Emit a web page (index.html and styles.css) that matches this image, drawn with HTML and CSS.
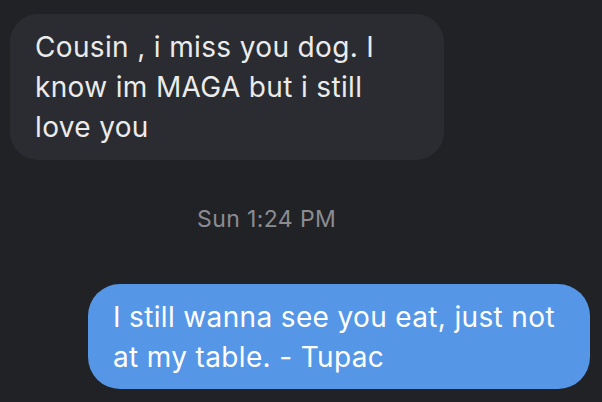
FILE: index.html
```html
<!DOCTYPE html>
<html>
<head>
<meta charset="utf-8">
<link rel="stylesheet" href="styles.css">
</head>
<body>
<div class="thread">
  <div class="bubble incoming">Cousin , i miss you dog. I<br>know im MAGA but i still<br>love you</div>
  <div class="stamp">Sun 1:24 PM</div>
  <div class="bubble outgoing">I still wanna see you eat, just not<br>at my table. - Tupac</div>
</div>
</body>
</html>
```

FILE: styles.css
```css
html, body {
  margin: 0;
  padding: 0;
  background: #212226;
  width: 602px;
  height: 402px;
  overflow: hidden;
}
.thread {
  display: flex;
  flex-direction: column;
  align-items: flex-start;
  padding-top: 14px;
  font-family: Inter, "Liberation Sans", sans-serif;
}
.bubble {
  box-sizing: border-box;
  font-size: 28px;
  line-height: 40px;
  letter-spacing: 0.35px;
  padding: 13px 20px 13px 25px;
  white-space: nowrap;
}
.incoming {
  margin-left: 10px;
  width: 434px;
  height: 146px;
  background: #2a2c31;
  color: #ebebec;
  border-radius: 28px;
}
.stamp {
  margin-top: 46px;
  margin-left: 197px;
  font-size: 23px;
  line-height: 26px;
  letter-spacing: 0.4px;
  color: #8b8c91;
}
.outgoing {
  margin-top: 52px;
  margin-left: 88px;
  width: 502px;
  height: 105px;
  background: #5596e6;
  color: #ffffff;
  border-radius: 32px;
}
```
